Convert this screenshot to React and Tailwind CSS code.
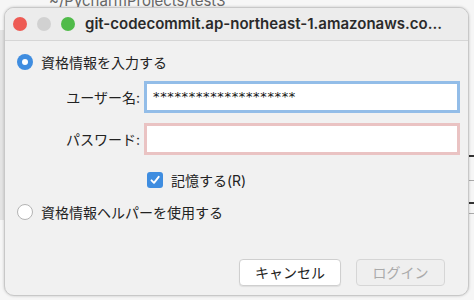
import React from "react";

const jp = { fontFamily: '"Inter", "Noto Sans CJK JP", sans-serif' };

export default function App() {
  return (
    <div className="relative w-[474px] h-[300px] overflow-hidden bg-[#f6f6f6]" style={jp}>
      <div className="absolute left-[49px] top-[-10px] text-[15px] text-[#666] whitespace-nowrap">~/PycharmProjects/test3</div>
      <div className="absolute left-0 top-[177px] w-[3px] h-[3px] bg-[#4a8fd8]" />
      <div className="absolute left-0 top-[30px] w-[4px] h-[190px] bg-[#e4e4e4]" />
      <div className="absolute right-0 top-[155px] w-[5px] h-[2px] bg-[#333]" />
      <div className="absolute right-0 top-[180px] w-[5px] h-[1px] bg-[#aaa]" />
      <div className="absolute right-0 top-[202px] w-[5px] h-[2px] bg-[#333]" />
      <div className="absolute right-0 top-[213px] w-[5px] h-[1px] bg-[#aaa]" />
      <div className="relative pt-[7px] pl-[4px]">
        <div className="w-[465px] h-[289px] rounded-[10px] bg-[#f1f1f1] border border-[#c8c8c8] shadow-[0_0_3px_rgba(0,0,0,0.2)] flex flex-col overflow-hidden">
          <div className="h-[33px] shrink-0 flex items-center border-b border-[#d6d6d6] bg-[#ececec]">
            <div className="flex items-center gap-[10px] pl-[8px]">
              <span className="w-[14px] h-[14px] rounded-full bg-[#ee5b54]" />
              <span className="w-[14px] h-[14px] rounded-full bg-[#d1d1d1]" />
              <span className="w-[14px] h-[14px] rounded-full bg-[#50bb4a]" />
            </div>
            <div className="ml-[10px] text-[15px] font-semibold text-[#2a2a2a] whitespace-nowrap">
              git-codecommit.ap-northeast-1.amazonaws.co...
            </div>
          </div>
          <div className="flex flex-col">
            <div className="flex items-center mt-[11px] ml-[12px] h-[20px]">
              <span className="w-[16px] h-[16px] rounded-full bg-[#3f8de0] flex items-center justify-center">
                <span className="w-[6px] h-[6px] rounded-full bg-white" />
              </span>
              <span className="ml-[8px] text-[14px] text-[#222]">資格情報を入力する</span>
            </div>
            <div className="flex items-center mt-[9px] h-[32px]">
              <span className="w-[135px] text-right text-[14px] text-[#222]">ユーザー名:</span>
              <div className="ml-[4px] w-[316px] h-[32px] bg-white border-[3px] border-[#93bde8] flex items-center pl-[6px]">
                <span className="text-[13px] text-[#111] tracking-[0.65px]" style={{ fontFamily: '"DejaVu Sans", sans-serif' }}>********************</span>
              </div>
            </div>
            <div className="flex items-center mt-[10px] h-[32px]">
              <span className="w-[135px] text-right text-[14px] text-[#222]">パスワード:</span>
              <div className="ml-[4px] w-[316px] h-[32px] bg-white border-[3px] border-[#eac3c3]" />
            </div>
            <div className="flex items-center mt-[16px] ml-[142px] h-[18px]">
              <span className="w-[16px] h-[16px] rounded-[3px] bg-[#3f8de0] flex items-center justify-center">
                <svg width="12" height="12" viewBox="0 0 12 12">
                  <path d="M2.5 6.3 L5 8.8 L9.7 2.8" fill="none" stroke="white" strokeWidth="1.9" strokeLinecap="round" strokeLinejoin="round" />
                </svg>
              </span>
              <span className="ml-[8px] text-[14px] text-[#222]">記憶する(R)</span>
            </div>
            <div className="flex items-center mt-[13px] ml-[12px] h-[20px]">
              <span className="w-[16px] h-[16px] rounded-full bg-white border border-[#b4b4b4]" />
              <span className="ml-[8px] text-[14px] text-[#222]">資格情報ヘルパーを使用する</span>
            </div>
            <div className="flex justify-end gap-[15px] mt-[37px] mr-[23px]">
              <div className="w-[102px] h-[27px] bg-white border border-[#cfcfcf] rounded-[4px] flex items-center justify-center text-[14px] text-[#222] shadow-[0_1px_1px_rgba(0,0,0,0.08)]">キャンセル</div>
              <div className="w-[89px] h-[27px] bg-[#efefef] border border-[#d6d6d6] rounded-[4px] flex items-center justify-center text-[14px] text-[#aaa]">ログイン</div>
            </div>
          </div>
        </div>
      </div>
    </div>
  );
}
